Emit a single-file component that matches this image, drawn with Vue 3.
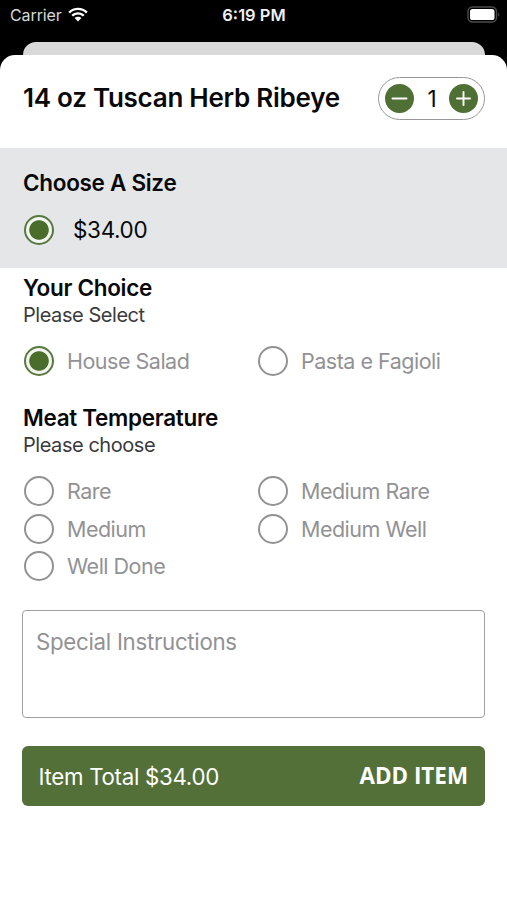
<script setup>
import { ref, computed } from 'vue'

const price = 34
const quantity = ref(1)
const total = computed(() => (price * quantity.value).toFixed(2))
const instructions = ref('')

const groups = ref([
  { title: 'Your Choice', hint: 'Please Select', selected: 'House Salad', options: ['House Salad', 'Pasta e Fagioli'] },
  { title: 'Meat Temperature', hint: 'Please choose', selected: '', options: ['Rare', 'Medium Rare', 'Medium', 'Medium Well', 'Well Done'] },
])
</script>

<template>
  <div class="screen">
    <header class="status">
      <div class="carrier">
        <span>Carrier</span>
        <svg class="wifi" width="20" height="15" viewBox="0 0 20 15">
          <path d="M0.3 4.7 C5.6-.7 14.4-.7 19.7 4.7 L18 6.4 C13.6 2 6.4 2 2 6.4 Z" />
          <path d="M3.4 7.9 C7.2 4.2 12.8 4.2 16.6 7.9 L14.9 9.6 C12.1 6.9 7.9 6.9 5.1 9.6 Z" />
          <path d="M6.6 11.1 C8.5 9.3 11.5 9.3 13.4 11.1 L10 14.6 Z" />
        </svg>
      </div>
      <span class="time">6:19 PM</span>
      <svg class="battery" width="34" height="18" viewBox="0 0 34 18">
        <rect x="1" y="1" width="28.5" height="15" rx="4.5" fill="none" stroke="#4c4c4e" stroke-width="1.4" />
        <rect x="3" y="3" width="24.5" height="11" rx="2.6" fill="#fff" />
        <path d="M31.4 6.5 Q33 8.5 31.4 10.5 Z" fill="#6a6a6c" />
      </svg>
    </header>
    <div class="back-sheet"></div>
    <main class="sheet">
      <section class="top">
        <h1>14 oz Tuscan Herb Ribeye</h1>
        <div class="stepper">
          <button class="round" aria-label="Decrease" @click="quantity = Math.max(1, quantity - 1)">
            <svg width="29" height="29" viewBox="0 0 29 29"><path d="M7.5 14.5H21.5" /></svg>
          </button>
          <span class="count">{{ quantity }}</span>
          <button class="round" aria-label="Increase" @click="quantity++">
            <svg width="29" height="29" viewBox="0 0 29 29"><path d="M8 14.5H21M14.5 8V21" /></svg>
          </button>
        </div>
      </section>

      <section class="size">
        <h2>Choose A Size</h2>
        <div class="size-option">
          <span class="radio on"></span>
          <span class="price">$34.00</span>
        </div>
      </section>

      <section v-for="group in groups" :key="group.title" class="group">
        <h2>{{ group.title }}</h2>
        <p class="hint">{{ group.hint }}</p>
        <div class="options">
          <div v-for="option in group.options" :key="option" class="option" @click="group.selected = option">
            <span class="radio" :class="{ on: group.selected === option }"></span>
            <span class="label">{{ option }}</span>
          </div>
        </div>
      </section>

      <textarea v-model="instructions" class="notes" placeholder="Special Instructions"></textarea>

      <button class="add">
        <span class="total">Item Total ${{ total }}</span>
        <span class="cta">ADD ITEM</span>
      </button>
    </main>
  </div>
</template>

<style>
body {
  background: #000;
}
</style>

<style scoped>
.screen {
  display: flex;
  flex-direction: column;
  height: 900px;
  overflow: hidden;
  background: #000;
  color: #080808;
  font-family: Inter, "Liberation Sans", sans-serif;
}
.status {
  display: grid;
  grid-template-columns: 1fr auto 1fr;
  align-items: center;
  height: 30px;
  margin-bottom: 11.5px;
  padding: 0 6px 0 7px;
  color: #fff;
}
.carrier {
  display: flex;
  align-items: center;
  gap: 6px;
  padding-left: 3px;
  font-size: 16px;
  letter-spacing: -0.1px;
  color: #d8d8d8;
}
.wifi {
  margin-bottom: 2px;
  fill: #fff;
}
.time {
  font-size: 16.5px;
  font-weight: 600;
  color: #f0f0f0;
}
.battery {
  justify-self: end;
}
.back-sheet {
  flex: none;
  height: 13.5px;
  margin: 0 22.5px;
  border-radius: 13px 13px 0 0;
  background: #d9d9d9;
}
.sheet {
  flex: 1;
  border-radius: 15px 15px 0 0;
  background: #fff;
}
.top {
  display: flex;
  align-items: center;
  justify-content: space-between;
  height: 93px;
  padding: 0 22px 7px 23px;
  box-sizing: border-box;
}
h1,
h2,
p {
  margin: 0;
  white-space: nowrap;
}
h1 {
  font-size: 26px;
  line-height: 32px;
  font-weight: 600;
  letter-spacing: -0.26px;
}
.stepper {
  display: flex;
  align-items: center;
  justify-content: space-between;
  width: 107px;
  height: 43px;
  padding: 0 6px;
  box-sizing: border-box;
  border: 1.5px solid #98989c;
  border-radius: 22px;
}
.round {
  display: block;
  width: 29px;
  height: 29px;
  padding: 0;
  border: 0;
  border-radius: 50%;
  background: #4f7035;
}
.round svg {
  display: block;
  fill: none;
  stroke: #fff;
  stroke-width: 1.9;
  stroke-linecap: round;
}
.count {
  padding-left: 1px;
  font-size: 22.5px;
}
.size {
  height: 120px;
  padding: 20px 23px 0;
  box-sizing: border-box;
  background: #e4e6e8;
}
h2 {
  font-size: 22.5px;
  line-height: 30px;
  font-weight: 600;
  letter-spacing: -0.3px;
}
.size-option {
  display: flex;
  align-items: center;
  gap: 19px;
  height: 30px;
  margin-top: 17px;
  padding-left: 1px;
}
.radio {
  flex: none;
  width: 30px;
  height: 30px;
  box-sizing: border-box;
  border: 2px solid #929294;
  border-radius: 50%;
}
.radio.on {
  border-color: #59783f;
  background: radial-gradient(circle, #4b6d2c 9.3px, #f2f5ef 10.2px);
}
.price {
  padding-bottom: 2px;
  font-size: 22.5px;
  letter-spacing: -0.35px;
}
.group {
  padding: 5px 23px 0;
}
.hint {
  font-size: 20px;
  line-height: 24px;
  letter-spacing: -0.45px;
  color: #3a3a3c;
}
.options {
  display: grid;
  grid-template-columns: 234px 1fr;
  row-gap: 7.7px;
  padding: 19px 0 22px 1px;
}
.option {
  display: flex;
  align-items: center;
  gap: 13px;
  height: 30px;
}
.label {
  font-size: 21.5px;
  letter-spacing: -0.5px;
  color: #929295;
  white-space: nowrap;
}
.notes {
  display: block;
  width: 463px;
  height: 108px;
  margin: 7px 22px 28px;
  padding: 16px 13px;
  box-sizing: border-box;
  border: 1.5px solid #a0a0a2;
  border-radius: 4px;
  outline: 0;
  resize: none;
  background: #fff;
  font-family: inherit;
  font-size: 22.3px;
  line-height: 30px;
  letter-spacing: -0.3px;
}
.notes::placeholder {
  color: #929295;
  opacity: 1;
}
.add {
  display: flex;
  align-items: center;
  justify-content: space-between;
  width: 463px;
  height: 60px;
  margin: 0 22px;
  padding: 0 17px 0 16.5px;
  border: 0;
  border-radius: 6px;
  background: #527038;
  color: #fff;
  font-family: inherit;
}
.total {
  font-size: 22.3px;
  letter-spacing: -0.3px;
}
.cta {
  padding-bottom: 1px;
  font-family: "Open Sans", "Noto Sans", sans-serif;
  font-size: 22.4px;
  font-weight: 700;
}
</style>
